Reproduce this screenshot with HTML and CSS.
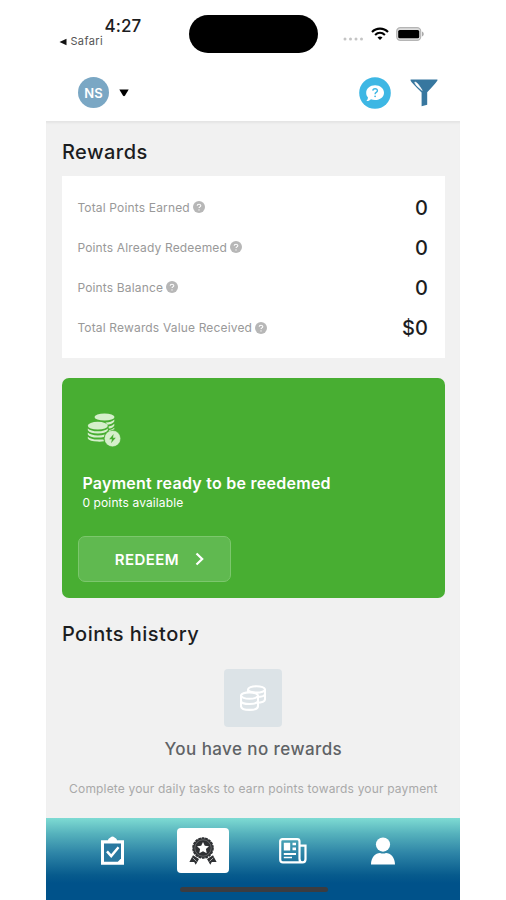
FILE: index.html
```
<!DOCTYPE html>
<html lang="en">
<head>
<meta charset="utf-8">
<title>Rewards</title>
<link rel="stylesheet" href="styles.css">
</head>
<body>
<svg class="defs" width="0" height="0">
  <symbol id="help" viewBox="0 0 12 12"><circle cx="6" cy="6" r="6" fill="#b7b7b7"/><path d="M4.2 4.8C4.2 2.7 7.8 2.7 7.8 4.7C7.8 5.8 6 6 6 7.1" fill="none" stroke="#fff" stroke-width="1.1"/><circle cx="6" cy="8.9" r=".7" fill="#fff"/></symbol>
</svg>
<div class="phone">
  <div class="status">
    <div class="clock">
      <span class="time">4:27</span>
      <span class="back"><svg width="8" height="8" viewBox="0 0 8 8"><path d="M7.5 0.7V7.3L0.5 4Z" fill="#111"/></svg><span>Safari</span></span>
    </div>
    <div class="island"></div>
    <div class="signals">
      <svg class="dots" width="21" height="4" viewBox="0 0 21 4" fill="#c4c4c4"><circle cx="2" cy="2" r="1.5"/><circle cx="7.5" cy="2" r="1.5"/><circle cx="13" cy="2" r="1.5"/><circle cx="18.5" cy="2" r="1.5"/></svg>
      <svg class="wifi" width="18" height="14" viewBox="0 0 18 14" fill="none" stroke="#000" stroke-width="2.1"><path d="M1 5.1C5.4 .5 12.6 .5 17 5.1"/><path d="M4.1 8C7 5.2 11 5.2 13.9 8"/><path d="M9 12.9L6.5 10.4C7.9 9.2 10.1 9.2 11.5 10.4Z" fill="#000" stroke="none"/></svg>
      <svg class="battery" width="29" height="14" viewBox="0 0 29 14"><rect x=".7" y=".7" width="24" height="12.6" rx="3.6" fill="#ddd" stroke="#b5b5b5" stroke-width="1.2"/><rect x="2.2" y="2.9" width="21" height="8.4" rx="1.6" fill="#000"/><path d="M26 4.5C28.3 5.3 28.3 8.7 26 9.5Z" fill="#aaa"/></svg>
    </div>
  </div>
  <header class="header">
    <div class="avatar">NS</div>
    <svg class="caret" width="10" height="8" viewBox="0 0 10 8"><path d="M.3 .5H9.7L5.9 6.7Q5 7.6 4.1 6.7Z" fill="#000"/></svg>
    <svg class="chat" width="32" height="32" viewBox="0 0 32 32"><circle cx="16" cy="16" r="15.8" fill="#3db7e4"/><path d="M16.1 8.3C21.2 8.3 25 11.5 25 15.7S21.2 23 16.1 23C14.6 23 13.2 22.8 12 22.2C10.4 23.6 8.8 24.2 7.3 24C8.5 22.9 9 21.8 8.9 20.2C7.6 18.9 7.2 17.4 7.2 15.7C7.2 11.5 11 8.3 16.1 8.3Z" fill="#fff"/><path d="M13.8 13.6C14 11 18.6 11.2 18.4 13.8C18.2 15.5 16.1 15.4 16.1 17.2" fill="none" stroke="#3db7e4" stroke-width="1.4"/><circle cx="16.1" cy="19.3" r=".9" fill="#3db7e4"/></svg>
    <svg class="funnel" width="28" height="28" viewBox="0 0 28 28"><path d="M1 .5H27Q28 .5 27.4 1.5Q26.8 3.2 17.2 13.2V25.8L11.6 27.3V13.5Q1 3.2 .6 1.5Q0 .5 1 .5Z" fill="#37779f"/><path d="M4.8 3.1C7 3.2 9 6.4 12.2 11.4C8.8 8.9 5.1 5.8 4.8 3.1Z" fill="#fff" stroke="#fff" stroke-width=".7"/></svg>
  </header>
  <main class="content">
    <h1 class="title">Rewards</h1>
    <section class="totals">
      <div class="row"><span class="label">Total Points Earned</span><svg class="help"><use href="#help"/></svg><span class="value">0</span></div>
      <div class="row"><span class="label">Points Already Redeemed</span><svg class="help"><use href="#help"/></svg><span class="value">0</span></div>
      <div class="row"><span class="label">Points Balance</span><svg class="help"><use href="#help"/></svg><span class="value">0</span></div>
      <div class="row"><span class="label">Total Rewards Value Received</span><svg class="help"><use href="#help"/></svg><span class="value">$0</span></div>
    </section>
    <section class="payment">
      <svg class="coins" width="34" height="34" viewBox="0 0 34 34" fill="#d5efcb">
        <ellipse cx="17.5" cy="4" rx="10" ry="3.6"/>
        <path d="M18.5 9.6Q24.5 9.5 27.3 6.5V8.2Q26 11 20.5 11.8ZM21.6 13.5Q25.7 12.8 27.3 10.8V12.4Q26.4 14.7 21.8 15.6ZM21.9 17.3Q25.7 16.5 27.3 14.8V16.2Q24.5 16.8 21.9 18.8Z"/>
        <ellipse cx="10.8" cy="12.7" rx="10" ry="3.9"/>
        <path d="M.8 15.4Q3.8 18.2 10.8 18.2T20.8 15.4V17.3Q18.4 20.6 10.8 20.6T.8 17.3ZM.8 19.6Q3.8 22.4 10.8 22.4Q15 22.4 17.7 21.5L16.8 24Q14.4 24.6 10.8 24.6Q2.4 24.6 .8 21.5ZM.8 23.7Q3.8 26.5 10.8 26.5H16.4L17 28.2Q14 28.8 10.8 28.6Q2.4 28.5 .8 25.5Z"/>
        <circle cx="25.5" cy="25.6" r="8.1" stroke="#48ae32" stroke-width=".4"/><path d="M26.6 21L22.2 26.3H25L24 30.2L28.8 24.8H26Z" fill="#48ae32"/>
      </svg>
      <h2 class="ready">Payment ready to be reedemed</h2>
      <p class="available">0 points available</p>
      <button class="redeem"><span>REDEEM</span><svg width="9" height="14" viewBox="0 0 9 14"><path d="M1.5 1.5L7.2 7L1.5 12.5" fill="none" stroke="#fff" stroke-width="2.2"/></svg></button>
    </section>
    <h2 class="title history">Points history</h2>
    <section class="empty">
      <div class="tile"><svg width="26" height="26" viewBox="0 0 26 26" fill="#dce3e7" stroke="#fff" stroke-width="2.1"><path d="M8 4.7V14C8 19 25 19 25 14V4.7"/><ellipse cx="16.5" cy="4.4" rx="8.5" ry="3.2"/><path d="M8 9C8 13 25 13 25 9" fill="none"/><path d="M1 11V21C1 26.2 18 26.2 18 21V11"/><ellipse cx="9.5" cy="10.6" rx="8.5" ry="3.2"/><path d="M1 15.8C1 20 18 20 18 15.8" fill="none"/></svg></div>
      <p class="none">You have no rewards</p>
      <p class="tip">Complete your daily tasks to earn points towards your payment</p>
    </section>
  </main>
  <nav class="nav">
    <a class="tab"><svg width="26" height="30" viewBox="0 0 26 30"><path d="M1 4.2H8C8 2.5 9.7 2.4 10.4 1.5Q12.5-.3 14.6 1.5C15.3 2.4 17 2.5 17 4.2H24V28.8H1Z" fill="#fff"/><path d="M4 7.4H21V22.5L17.8 25.7H4Z" fill="#2878a0"/><path d="M7 15.4L11.2 20L18.5 11.2" fill="none" stroke="#fff" stroke-width="2.5"/></svg></a>
    <a class="tab active"><svg width="28" height="28" viewBox="0 0 28 28"><circle cx="14" cy="11" r="10" fill="#2e3033" stroke="#2e3033" stroke-width="1.6" stroke-dasharray="2.7 .8"/><circle cx="14" cy="11" r="8.2" fill="none" stroke="#999" stroke-width=".5"/><path d="M14 4.9L15.8 8.8L20 9.3L16.9 12.1L17.7 16.3L14 14.2L10.3 16.3L11.1 12.1L8 9.3L12.2 8.8Z" fill="#fff"/><path d="M4 18.2L10 22L6.7 27.7L5.2 24.9L.4 25ZM24 18.2L18 22L21.3 27.7L22.8 24.9L27.6 25Z" fill="#2e3033"/><path d="M3.7 20.8L7.5 24.4M24.3 20.8L20.5 24.4" stroke="#fff" stroke-width=".6"/></svg></a>
    <a class="tab"><svg width="28" height="26" viewBox="0 0 28 26" fill="none" stroke="#fff" stroke-width="2.2"><path d="M20.5 7.7H26.5V21.3Q26.5 24.4 23.5 24.4H4Q1.2 24.4 1.2 21.4V3.5Q1.2 1.2 3.5 1.2H18.2Q20.5 1.2 20.5 3.5V20.7Q20.5 24.4 23.5 24.4"/><path d="M4.8 4.8H11.2V12.4H4.8ZM13.5 4.8H17V7.2H13.5ZM13.5 9.5H17V12.2H13.5ZM4.8 15H17V17.1H4.8ZM4.8 18.7H13V20.3H4.8Z" fill="#fff" stroke="none"/></svg></a>
    <a class="tab"><svg width="26" height="28" viewBox="0 0 26 28" fill="#fff"><circle cx="13" cy="7.6" r="7.1"/><path d="M1 27.5C1 20.3 5.5 15.9 10 15.9Q13 17 16 15.9C20.5 15.9 25 20.3 25 27.5Z"/></svg></a>
    <div class="home"></div>
  </nav>
</div>
</body>
</html>
```
FILE: styles.css
```
* { box-sizing: border-box; }
body { margin: 0; background: #fff; font-family: Inter, "Liberation Sans", sans-serif; color: #1c1d1f; }
h1, h2, p { margin: 0; }
svg { display: block; flex: none; }
.defs { position: absolute; }
.phone { width: 414px; height: 900px; margin-left: 46.4px; display: flex; flex-direction: column; overflow: hidden; }
.status { height: 64px; display: flex; align-items: flex-start; flex: none; }
.clock { width: 142.5px; padding: 17px 0 0 13px; display: flex; flex-direction: column; flex: none; }
.time { font-size: 17px; line-height: 19px; font-weight: 500; padding-left: 45px; letter-spacing: 0.1px; }
.back { display: flex; align-items: center; gap: 3px; font-size: 11px; line-height: 11px; letter-spacing: .4px; color: #555; }
.island { width: 129px; height: 38px; margin-top: 15px; border-radius: 19px; background: #000; }
.signals { display: flex; align-items: center; margin: 27px 0 0 25.1px; height: 14px; }
.dots { margin-top: 9px; }
.wifi { margin-left: 7px; }
.battery { margin-left: 7px; }
.header { height: 57px; flex: none; display: flex; align-items: center; padding: 0 22.4px 0 31.6px; }
.avatar { width: 31px; height: 31px; border-radius: 50%; background: #7aa7c4; color: #fff; font-size: 13px; font-weight: 600; display: flex; align-items: center; justify-content: center; }
.caret { margin-left: 10px; }
.chat { margin-left: auto; }
.funnel { margin-left: 19px; }
.content { height: 697px; flex: none; background: #f1f1f1; padding: 18px 15.5px 0; box-shadow: inset 0 3px 2px -1px #e4e4e4; }
.title { font-size: 20px; font-weight: 500; line-height: 26px; letter-spacing: .48px; }
.totals { height: 182px; margin-top: 11px; padding: 11px 17px 0 15.5px; background: #fff; }
.row { height: 40.2px; display: flex; align-items: center; }
.label { font-size: 12px; letter-spacing: .16px; color: #999; }
.help { width: 12px; height: 12px; margin-left: 3px; }
.value { margin-left: auto; font-size: 20px; line-height: 24px; padding-top: 1px; font-weight: 500; }
.payment { height: 220px; margin-top: 20px; padding: 35px 15.5px 0; background: #48ae32; border-radius: 7px; color: #fff; }
.coins { margin-left: 9.6px; }
.ready { margin: 25px 0 0 5px; font-size: 16px; line-height: 22px; font-weight: 600; letter-spacing: .26px; white-space: nowrap; }
.available { margin-left: 5px; font-size: 12px; line-height: 18px; letter-spacing: .12px; }
.redeem { width: 153px; height: 46px; margin: 24px 0 0 .4px; padding: 0 26px 0 36px; display: flex; align-items: center; justify-content: space-between; border: 1px solid #7cc76d; border-radius: 7px; background: #60b950; color: #fff; font: 600 15px Inter, sans-serif; letter-spacing: .4px; }
.history { margin-top: 23px; }
.empty { display: flex; flex-direction: column; align-items: center; margin-top: 22px; }
.tile { width: 58px; height: 58px; display: flex; align-items: center; justify-content: center; background: #dce3e7; border-radius: 4px; }
.none { margin-top: 10px; font-size: 17px; line-height: 24px; font-weight: 500; letter-spacing: .42px; color: #5f6366; white-space: nowrap; }
.tip { margin-top: 18px; font-size: 12px; line-height: 20px; letter-spacing: .17px; color: #a9a9a9; white-space: nowrap; }
.nav { height: 82px; flex: none; display: grid; grid-template-columns: 52px 52px 52px 52px; column-gap: 38px; align-content: start; padding: 10px 0 0 40.2px; background: linear-gradient(#7edbd3 0, #55b1bc 16px, #2e85a7 35px, #075b8d 57px, #00528a 65px); }
.tab { height: 45px; display: flex; align-items: center; justify-content: center; border-radius: 4px; }
.active { background: #fff; }
.home { grid-column: 1 / -1; width: 148px; height: 5px; margin: 14px 0 0 93.4px; background: #3c3c40; border-radius: 3px; }
```
